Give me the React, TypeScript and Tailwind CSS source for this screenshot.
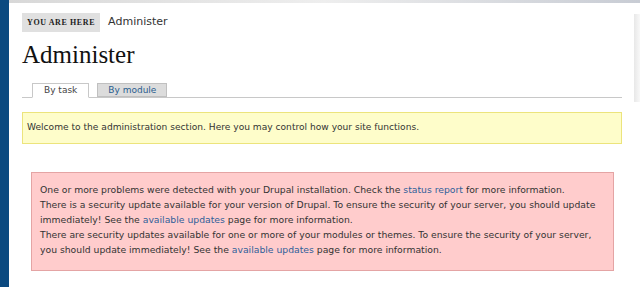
import React from 'react';

const sans = "font-['DejaVu_Sans',Verdana,sans-serif]";

export default function App() {
  return (
    <div className="relative flex h-[287px] w-[640px] overflow-hidden bg-white">
      {/* left blue rail */}
      <div className="w-[9px] shrink-0 bg-[#0b4a80]" />

      <div className="flex flex-1 flex-col">
        {/* top image strip */}
        <div className="h-[3px] bg-gradient-to-r from-[#d8d8d8] via-[#eeeeee] to-[#c8ccd4]" />

        <div className="flex w-[613px] flex-col pl-[13px]">
          {/* breadcrumb */}
          <div className="mt-[10px] flex items-center">
            <span className="bg-[#e0e0e0] px-[5px] py-[5px] font-['Liberation_Serif',serif] text-[8px] font-bold leading-[9px] tracking-[0.6px] text-[#222]">
              YOU ARE HERE
            </span>
            <span className={`${sans} ml-[8px] text-[11px] text-[#333]`}>Administer</span>
          </div>

          {/* title */}
          <h1 className="mt-[8px] font-['Liberation_Serif',serif] text-[25px] leading-[30px] text-[#111]">
            Administer
          </h1>

          {/* tabs */}
          <div className={`${sans} mt-[13px] flex border-b border-[#c8c8c8] pl-[10px] text-[9px] leading-[11px]`}>
            <div className="-mb-px border border-b-white border-[#c8c8c8] bg-white px-[11px] pt-[1px] text-[#444]">By task</div>
            <div className="ml-[8px] border border-[#c0c0c0] bg-[#dcdcdc] px-[10px] pt-[1px] text-[#2a5d8f]">By module</div>
          </div>

          {/* welcome message */}
          <div className={`${sans} mt-[14px] border border-[#ece47c] bg-[#fefdca] px-[4px] pb-[10px] pt-[8px] text-[9.1px] leading-[12px] text-[#333]`}>
            Welcome to the administration section. Here you may control how your site functions.
          </div>

          {/* error message */}
          <div className={`${sans} ml-[9px] mr-[8px] mt-[28px] border border-[#e4a4a4] bg-[#ffcccc] pb-[13px] pl-[8px] pr-[4px] pt-[9px] text-[9.25px] leading-[15px] text-[#333]`}>
            <div>
              One or more problems were detected with your Drupal installation. Check the{' '}
              <a className="text-[#2f5f9a]">status report</a> for more information.
            </div>
            <div>
              There is a security update available for your version of Drupal. To ensure the security of your server, you should update
              immediately! See the <a className="text-[#2f5f9a]">available updates</a> page for more information.
            </div>
            <div>
              There are security updates available for one or more of your modules or themes. To ensure the security of your server,
              you should update immediately! See the <a className="text-[#2f5f9a]">available updates</a> page for more information.
            </div>
          </div>
        </div>
      </div>

      {/* right edge shadow */}
      <div className="absolute right-0 top-[14px] h-[88px] w-[6px] bg-gradient-to-r from-[#e8e8e8] to-[#f8f8f8]" />
    </div>
  );
}
